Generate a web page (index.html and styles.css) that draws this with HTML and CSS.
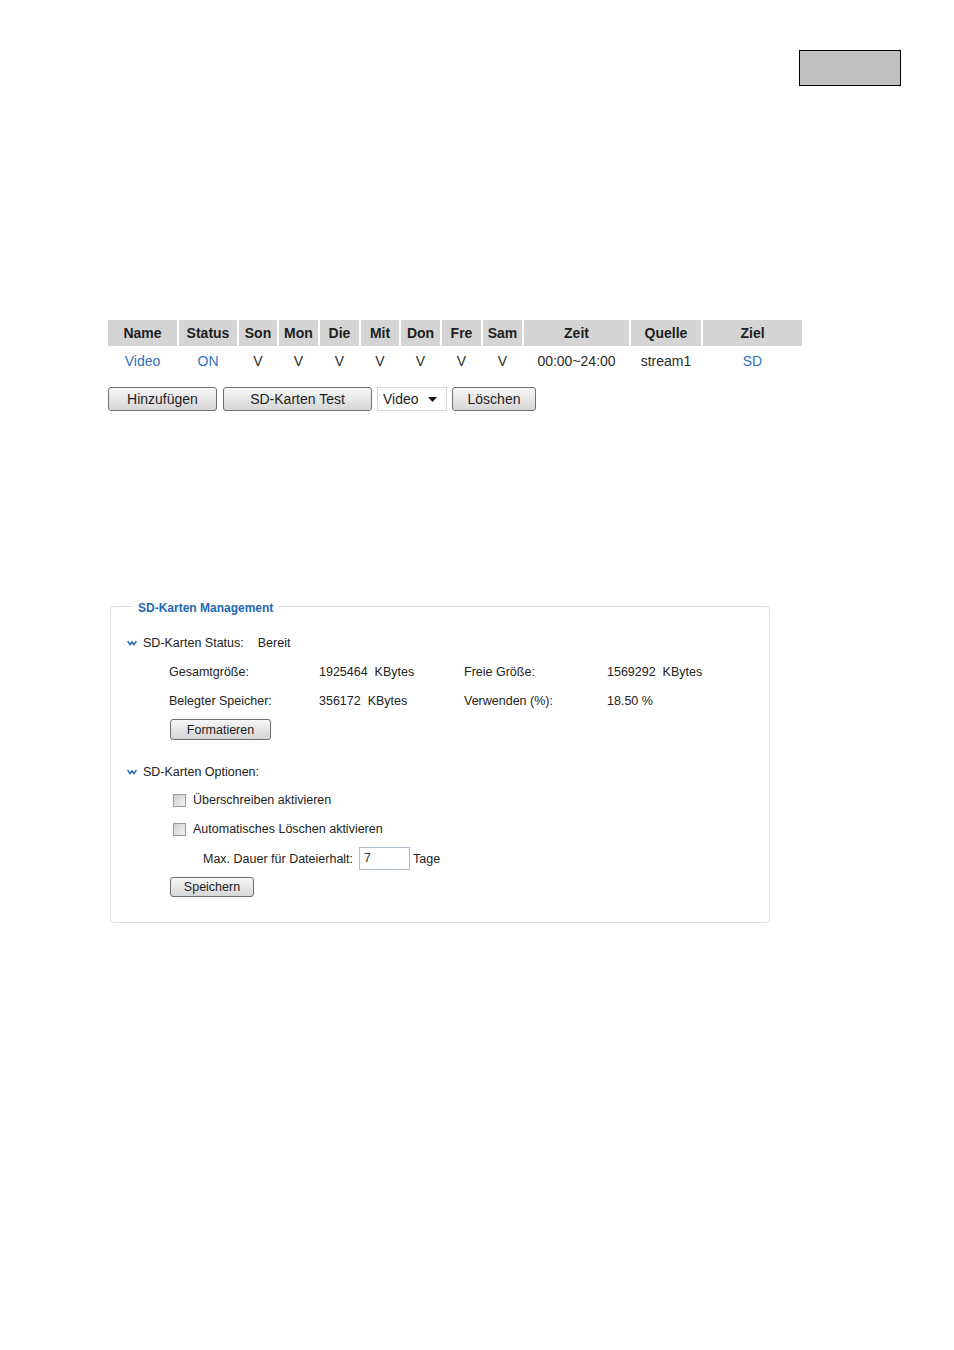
FILE: index.html
```html
<!DOCTYPE html>
<html lang="de">
<head>
<meta charset="utf-8">
<title>SD-Karten</title>
<link rel="stylesheet" href="styles.css">
</head>
<body>
<div class="page">
  <div class="top-bar"><div class="gray-box"></div></div>

  <table class="schedule">
    <colgroup>
      <col class="c-name"><col class="c-status"><col class="c-day"><col class="c-day2"><col class="c-day2"><col class="c-day"><col class="c-day2"><col class="c-day2"><col class="c-day2"><col class="c-zeit"><col class="c-quelle"><col class="c-ziel">
    </colgroup>
    <thead>
      <tr>
        <th>Name</th><th>Status</th><th>Son</th><th>Mon</th><th>Die</th><th>Mit</th><th>Don</th><th>Fre</th><th>Sam</th><th>Zeit</th><th>Quelle</th><th>Ziel</th>
      </tr>
    </thead>
    <tbody>
      <tr>
        <td class="link">Video</td><td class="link">ON</td><td>V</td><td>V</td><td>V</td><td>V</td><td>V</td><td>V</td><td>V</td><td>00:00~24:00</td><td>stream1</td><td class="link">SD</td>
      </tr>
    </tbody>
  </table>

  <div class="actions">
    <button class="btn btn-add">Hinzufügen</button>
    <button class="btn btn-test">SD-Karten Test</button>
    <div class="select">
      <span>Video</span>
      <svg class="caret" width="9" height="5" viewBox="0 0 9 5"><path d="M0 0 H9 L4.5 5 Z" fill="#111"/></svg>
    </div>
    <button class="btn btn-del">Löschen</button>
  </div>

  <fieldset class="mgmt">
    <legend>SD-Karten Management</legend>

    <div class="sec-head">
      <svg class="chev" width="10" height="6" viewBox="0 0 10 6"><path d="M0.6 1 L3 4.6 L5 1.8 L7 4.6 L9.4 1" fill="none" stroke="#2a6fb8" stroke-width="1.5"/></svg>
      <span>SD-Karten Status:</span><span class="state">Bereit</span>
    </div>

    <div class="info-grid">
      <span>Gesamtgröße:</span><span>1925464&nbsp; KBytes</span><span>Freie Größe:</span><span>1569292&nbsp; KBytes</span>
      <span>Belegter Speicher:</span><span>356172&nbsp; KBytes</span><span>Verwenden (%):</span><span>18.50 %</span>
    </div>

    <button class="btn-sm btn-format">Formatieren</button>

    <div class="sec-head sec-options">
      <svg class="chev" width="10" height="6" viewBox="0 0 10 6"><path d="M0.6 1 L3 4.6 L5 1.8 L7 4.6 L9.4 1" fill="none" stroke="#2a6fb8" stroke-width="1.5"/></svg>
      <span>SD-Karten Optionen:</span>
    </div>

    <label class="check-row first"><span class="checkbox"></span>Überschreiben aktivieren</label>
    <label class="check-row"><span class="checkbox"></span>Automatisches Löschen aktivieren</label>

    <div class="keep-row">
      <span>Max. Dauer für Dateierhalt:</span>
      <span class="text-input">7</span>
      <span>Tage</span>
    </div>

    <button class="btn-sm btn-save">Speichern</button>
  </fieldset>
</div>
</body>
</html>
```

FILE: styles.css
```css
html, body {
  margin: 0;
  padding: 0;
  background: #ffffff;
}

.page {
  padding-top: 50px;
  font-family: "Liberation Sans", Arial, sans-serif;
  color: #222;
}

.top-bar {
  display: flex;
  justify-content: flex-end;
  padding-right: 53px;
}

.gray-box {
  box-sizing: border-box;
  width: 102px;
  height: 36px;
  background: #c0c0c0;
  border: 1px solid #000;
}

/* schedule table */
.schedule {
  margin: 232px 0 0 106px;
  border-collapse: separate;
  border-spacing: 2px 2px;
  table-layout: fixed;
  font-size: 14px;
}

.c-name { width: 69px; }
.c-status { width: 58px; }
.c-day { width: 38px; }
.c-day2 { width: 39px; }
.c-zeit { width: 105px; }
.c-quelle { width: 70px; }
.c-ziel { width: 99px; }

.schedule th {
  height: 26px;
  padding: 0;
  background: #d4d4d4;
  font-weight: bold;
  color: #1e1e1e;
  text-align: center;
}

.schedule td {
  height: 26px;
  padding: 0;
  text-align: center;
  color: #2b2b2b;
}

.schedule td.link {
  color: #2f72bf;
}

/* action buttons */
.actions {
  display: flex;
  align-items: center;
  margin: 11px 0 0 108px;
}

.btn {
  box-sizing: border-box;
  height: 24px;
  padding: 0;
  border: 1px solid #6f6f6f;
  border-radius: 3px;
  background: linear-gradient(#f7f7f7, #e6e6e6 50%, #d6d6d6);
  font-family: "Liberation Sans", Arial, sans-serif;
  font-size: 14px;
  color: #1e1e1e;
}

.btn-add { width: 109px; }
.btn-test { width: 149px; margin-left: 6px; }
.btn-del { width: 84px; margin-left: 5px; }

.select {
  box-sizing: border-box;
  display: flex;
  align-items: center;
  justify-content: space-between;
  width: 70px;
  height: 24px;
  margin-left: 5px;
  padding: 0 9px 0 5px;
  border: 1px solid #d6d6d6;
  background: #fff;
  font-size: 14px;
  color: #1e1e1e;
}

/* management box */
.mgmt {
  box-sizing: border-box;
  width: 660px;
  margin: 188px 0 0 110px;
  padding: 20px 0 25px 16px;
  border: 1px solid #d8dfe7;
  border-radius: 4px;
  font-size: 12.5px;
  color: #222;
}

.mgmt legend {
  margin-left: 6px;
  padding: 0 5px;
  font-size: 12px;
  line-height: 14px;
  font-weight: bold;
  color: #1f68b4;
  position: relative;
  top: 2px;
}

.sec-head {
  display: flex;
  align-items: center;
  height: 20px;
}

.chev {
  margin-right: 6px;
}

.state {
  margin-left: 14px;
}

.info-grid {
  display: grid;
  grid-template-columns: 150px 145px 143px auto;
  grid-auto-rows: 20px;
  row-gap: 9px;
  align-items: center;
  margin: 9px 0 0 42px;
}

.btn-sm {
  display: block;
  box-sizing: border-box;
  height: 21px;
  padding: 0;
  border: 1px solid #6f6f6f;
  border-radius: 3px;
  background: linear-gradient(#f7f7f7, #e6e6e6 50%, #d6d6d6);
  font-family: "Liberation Sans", Arial, sans-serif;
  font-size: 12.5px;
  color: #1e1e1e;
}

.btn-format {
  width: 101px;
  margin: 8px 0 0 43px;
}

.sec-options {
  margin-top: 22px;
}

.check-row {
  display: flex;
  align-items: center;
  height: 20px;
  margin: 9px 0 0 46px;
}

.check-row.first {
  margin-top: 8px;
}

.checkbox {
  box-sizing: border-box;
  width: 13px;
  height: 13px;
  margin-right: 7px;
  border: 1px solid #9a9a9a;
  background: linear-gradient(135deg, #cfcfcf, #f2f2f2);
}

.keep-row {
  display: flex;
  align-items: center;
  height: 23px;
  margin: 8px 0 0 76px;
}

.text-input {
  box-sizing: border-box;
  width: 51px;
  height: 23px;
  margin: 0 3px 0 6px;
  padding: 0 4px;
  border: 1px solid #aebdd0;
  background: #fff;
  line-height: 21px;
  color: #333;
}

.btn-save {
  width: 84px;
  height: 20px;
  margin: 7px 0 0 43px;
}
```
